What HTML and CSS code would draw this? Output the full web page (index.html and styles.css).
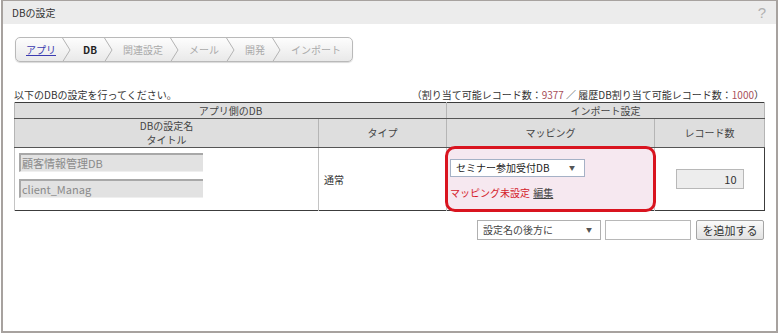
FILE: index.html
```html
<!DOCTYPE html>
<html lang="ja">
<head>
    <meta charset="UTF-8">
    <title>DBの設定</title>
    <link rel="stylesheet" href="styles.css">
</head>
<body>
    <div class="window">
        <div class="titlebar">
            <span>DBの設定</span>
            <span class="help">?</span>
        </div>
        <div class="content">
            <div class="steps">
                <a href="#" class="step step-link">アプリ</a>
                <svg class="chev" width="9" height="24" viewBox="0 0 9 24"><polyline points="0.5,0 8,12 0.5,24" /></svg>
                <span class="step step-current">DB</span>
                <svg class="chev" width="9" height="24" viewBox="0 0 9 24"><polyline points="0.5,0 8,12 0.5,24" /></svg>
                <span class="step">関連設定</span>
                <svg class="chev" width="9" height="24" viewBox="0 0 9 24"><polyline points="0.5,0 8,12 0.5,24" /></svg>
                <span class="step">メール</span>
                <svg class="chev" width="9" height="24" viewBox="0 0 9 24"><polyline points="0.5,0 8,12 0.5,24" /></svg>
                <span class="step">開発</span>
                <svg class="chev" width="9" height="24" viewBox="0 0 9 24"><polyline points="0.5,0 8,12 0.5,24" /></svg>
                <span class="step">インポート</span>
            </div>

            <div class="info-line">
                <span>以下のDBの設定を行ってください。</span>
                <span>（割り当て可能レコード数：<em>9377</em> ／ 履歴DB割り当て可能レコード数：<em>1000</em>）</span>
            </div>

            <table class="db-table">
                <colgroup>
                    <col class="col-name">
                    <col class="col-type">
                    <col class="col-map">
                    <col class="col-count">
                </colgroup>
                <tr class="group-row">
                    <th colspan="2">アプリ側のDB</th>
                    <th colspan="2">インポート設定</th>
                </tr>
                <tr class="head-row">
                    <th>DBの設定名<br>タイトル</th>
                    <th>タイプ</th>
                    <th>マッピング</th>
                    <th>レコード数</th>
                </tr>
                <tr class="body-row">
                    <td class="name-cell">
                        <div class="field">顧客情報管理DB</div>
                        <div class="field">client_Manag</div>
                    </td>
                    <td class="type-cell">通常</td>
                    <td class="map-cell">
                        <div class="highlight"></div>
                        <div class="map-inner">
                            <div class="select map-select">
                                <span>セミナー参加受付DB</span>
                                <span class="arrow">▼</span>
                            </div>
                            <div class="map-status">
                                <span class="unset">マッピング未設定</span>
                                <a href="#" class="edit">編集</a>
                            </div>
                        </div>
                    </td>
                    <td class="count-cell">
                        <div class="count-box">10</div>
                    </td>
                </tr>
            </table>

            <div class="add-row">
                <div class="select pos-select">
                    <span>設定名の後方に</span>
                    <span class="arrow">▼</span>
                </div>
                <div class="text-box"></div>
                <button class="add-btn">を追加する</button>
            </div>
        </div>
    </div>
</body>
</html>
```

FILE: styles.css
```css
* {
    margin: 0;
    padding: 0;
    box-sizing: border-box;
}
body {
    font-family: "Noto Sans CJK JP", "Noto Sans", sans-serif;
    font-size: 10px;
    color: #333;
    background: #fff;
}
.window {
    margin-left: 1px;
    width: 777px;
    height: 333px;
    border: 2px solid #a7a29f;
    border-top-width: 1px;
}
.titlebar {
    height: 23px;
    background: #ececec;
    display: flex;
    align-items: center;
    justify-content: space-between;
    padding: 0 10px 0 9px;
    line-height: 14px;
}
.help {
    color: #b0b0b0;
    font-size: 15px;
    font-family: "Liberation Sans", sans-serif;
}
.content {
    padding: 13px 12px 0 11px;
}
.steps {
    display: inline-flex;
    align-items: center;
    height: 25px;
    margin-left: 1px;
    padding-right: 4px;
    border: 1px solid #b9b9b9;
    border-radius: 5px;
    background: linear-gradient(#fdfdfd, #e9e9e9);
    box-shadow: 0 1px 1px rgba(0, 0, 0, 0.15);
    overflow: hidden;
}
.step {
    padding: 0 7px 0 10px;
    color: #aaa;
    line-height: 14px;
    text-decoration: none;
}
.step:first-child {
    padding-left: 10px;
    padding-right: 6px;
}
.step-link {
    color: #3b3bb0;
    text-decoration: underline;
}
.step-current {
    color: #222;
    font-weight: bold;
    padding-left: 12px;
}
.chev polyline {
    fill: none;
    stroke: #b3b3b3;
    stroke-width: 1;
}
.info-line {
    display: flex;
    justify-content: space-between;
    margin-top: 26px;
    line-height: 14px;
}
.info-line em {
    font-style: normal;
    color: #a8505a;
}
.db-table {
    width: 750px;
    border-collapse: collapse;
    table-layout: fixed;
    border: 1px solid #3c3c3c;
}
.col-name { width: 304px; }
.col-type { width: 128px; }
.col-map { width: 208px; }
.col-count { width: 110px; }
.db-table th {
    background: #dedede;
    font-weight: normal;
    color: #444;
    line-height: 13px;
    border-left: 1px solid #b5b5b5;
    border-right: 1px solid #b5b5b5;
}
.group-row th {
    height: 16px;
    border-bottom: 1px solid #555;
}
.head-row th {
    height: 28px;
    line-height: 14px;
    border-bottom: 1px solid #555;
}
.db-table td {
    border-left: 1px solid #c4c4c4;
    vertical-align: middle;
}
.name-cell {
    padding: 5px 4px 12px;
}
.field {
    width: 184px;
    height: 19px;
    background: #e2e2e2;
    border-top: 2px solid #a8a8a8;
    border-left: 2px solid #a8a8a8;
    border-bottom: 1px solid #efefef;
    color: #8a8a8a;
    font-size: 11px;
    line-height: 16px;
    padding-left: 1px;
}
.field + .field {
    margin-top: 7px;
}
.type-cell {
    padding-left: 5px;
}
.map-cell {
    position: relative;
    padding: 10px 3px 10px;
}
.highlight {
    position: absolute;
    top: -2px;
    left: -2px;
    right: -2px;
    bottom: -2px;
    border: 3px solid #d9141f;
    border-radius: 10px;
    background: #f6e8f0;
}
.map-inner {
    position: relative;
}
.select {
    display: flex;
    align-items: center;
    justify-content: space-between;
    background: #fff;
    line-height: 14px;
}
.arrow {
    font-size: 6px;
    color: #555;
}
.map-select {
    width: 135px;
    height: 18px;
    border: 1px solid #a5b1c6;
    padding: 0 9px 0 5px;
    color: #222;
}
.map-status {
    margin-top: 9px;
    line-height: 14px;
}
.unset {
    color: #d41a2b;
}
.edit {
    color: #444;
    margin-left: 1px;
}
.count-cell {
    text-align: center;
}
.count-box {
    display: inline-block;
    width: 68px;
    height: 20px;
    background: #ededed;
    border: 1px solid #b8b8b8;
    text-align: right;
    padding-right: 6px;
    font-size: 11px;
    line-height: 18px;
    color: #333;
}
.add-row {
    display: flex;
    justify-content: flex-end;
    gap: 4px;
    margin-top: 9px;
    width: 750px;
}
.pos-select {
    width: 124px;
    height: 20px;
    border: 1px solid #b0b0b0;
    padding: 0 8px 0 5px;
    color: #444;
}
.text-box {
    width: 86px;
    height: 20px;
    border: 1px solid #b8b8b8;
    background: #fff;
}
.add-btn {
    width: 68px;
    height: 20px;
    margin-left: 1px;
    border: 1px solid #a5a5a5;
    border-radius: 2px;
    background: linear-gradient(#fafafa, #e2e2e2);
    font-family: inherit;
    font-size: 11px;
    color: #333;
    line-height: 16px;
}
```
